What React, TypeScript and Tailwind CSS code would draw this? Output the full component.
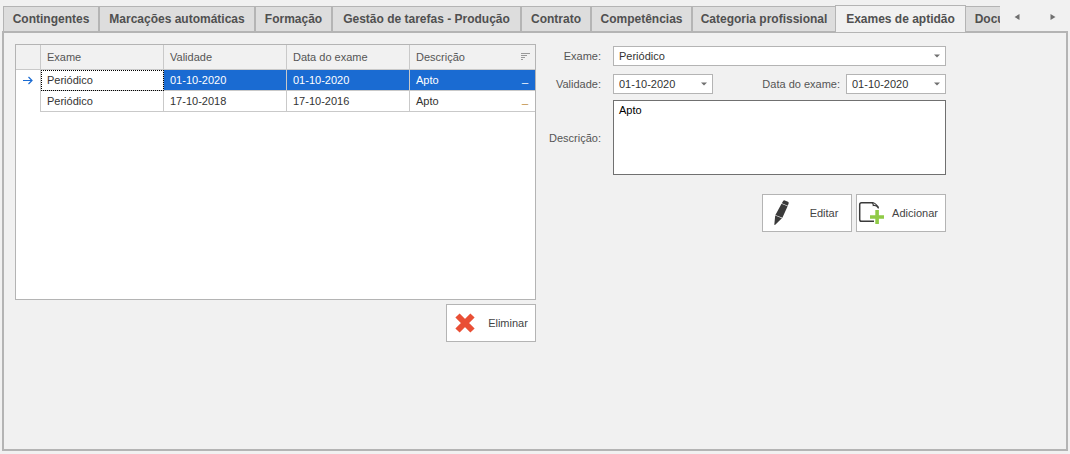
import { useState, type ReactNode } from "react";

const tabs = [
  { label: "Contingentes", width: "w-[97px]" },
  { label: "Marcações automáticas", width: "w-[156px]" },
  { label: "Formação", width: "w-[77px]" },
  { label: "Gestão de tarefas - Produção", width: "w-[189px]" },
  { label: "Contrato", width: "w-[70px]" },
  { label: "Competências", width: "w-[101px]" },
  { label: "Categoria profissional", width: "w-[142px]" },
  { label: "Exames de aptidão", width: "w-[131px]" },
  { label: "Documentos", width: "w-[92px]" },
];

const rows = [
  { exame: "Periódico", validade: "01-10-2020", data: "01-10-2020", descricao: "Apto" },
  { exame: "Periódico", validade: "17-10-2018", data: "17-10-2016", descricao: "Apto" },
];

function DownArrow() {
  return (
    <svg width="6" height="4" viewBox="0 0 6 4" aria-hidden="true">
      <path d="M0 .5h6L3 3.500z" fill="#707070" />
    </svg>
  );
}

function DateField({ id, value }: { id: string; value: string }) {
  return (
    <div className="flex h-5 w-[100px] border border-[#b4b4b4] bg-white">
      <input id={id} defaultValue={value} className="min-w-0 flex-1 pl-[5px] text-[#333333] outline-none" />
      <button type="button" aria-label="Abrir calendário" className="flex w-4 items-center justify-center">
        <DownArrow />
      </button>
    </div>
  );
}

function ActionButton({ icon, children }: { icon: ReactNode; children: ReactNode }) {
  return (
    <button type="button" className="flex h-[38px] w-[90px] items-center border border-[#b4b4b4] bg-white px-px text-[#444444]">
      {icon}
      <span className="flex-1 text-center">{children}</span>
    </button>
  );
}

function DeleteIcon() {
  return (
    <svg width="34" height="34" viewBox="0 0 34 34" className="shrink-0" aria-hidden="true">
      <path d="M9.500 9.500l15 15M24.500 9.500l-15 15" stroke="#e94f35" strokeWidth="6" />
    </svg>
  );
}

function PencilIcon() {
  return (
    <svg width="34" height="34" viewBox="0 0 34 34" className="shrink-0" aria-hidden="true">
      <path
        d="M19.300 4.700Q19.800 4 20.800 4.400L24 5.800Q25 6.300 24.700 7.300L23.800 9.800 17.800 7.200zM17.500 7.700L23.600 10.300 18.400 21.800 11.400 18.900zM11.200 19.400L17.900 22.200 11 29 10.300 28.700z"
        fill="#3a3a3a"
      />
    </svg>
  );
}

function AddIcon() {
  return (
    <svg width="28" height="34" viewBox="0 0 28 34" className="shrink-0" aria-hidden="true">
      <path d="M16 25.300H3.500Q1.700 25.300 1.700 23.500V8.500Q1.700 6.700 3.500 6.700H14.500" fill="none" stroke="#3a3a3a" strokeWidth="1.500" />
      <path d="M14 6.500Q17 6.500 20.300 11V12.500M14 6.500Q15.300 7.500 15.300 9.500Q18.500 9 20.300 12" fill="none" stroke="#3a3a3a" strokeWidth="1.200" />
      <path d="M17.300 14h3.600v5.200H26v3.600h-5.100V28h-3.600v-5.200H12v-3.600h5.300z" fill="#8fca46" />
    </svg>
  );
}

export default function App() {
  const [active, setActive] = useState(7);
  const head = "border-r border-b border-[#c9c9c9] bg-[#f1f1f1] pl-1.5 text-left font-normal text-[#555555]";
  const label = "text-right text-[#555555]";

  return (
    <main className="flex min-h-screen flex-col bg-[#f1f1f1] px-0.5 pt-[5px] pb-[3px] font-['Liberation_Sans',sans-serif] text-[11px] leading-4">
      <div className="flex h-[26px]">
        <div role="tablist" className="z-10 flex min-w-0 flex-1 items-end overflow-x-clip pl-px">
          {tabs.map((tab, i) => (
            <button
              key={tab.label}
              type="button"
              role="tab"
              aria-selected={i === active}
              onClick={() => setActive(i)}
              className={`${tab.width} shrink-0 text-center text-xs font-bold whitespace-nowrap text-[#505050] ${
                i === active
                  ? "-mb-px h-[27px] border border-b-0 border-[#b4b4b4] bg-[#f1f1f1]"
                  : `h-[25px] border-t border-[#b4b4b4] bg-[#dddddd] first:border-l ${i === active - 1 ? "" : "border-r-2"}`
              }`}
            >
              {tab.label}
            </button>
          ))}
        </div>
        <div className="flex w-[68px] items-center justify-between pr-3 pb-0.5 pl-3.5">
          <button type="button" aria-label="Separador anterior">
            <svg width="6" height="6" viewBox="0 0 6 6"><path d="M5.500 0v6L.5 3z" fill="#707070" /></svg>
          </button>
          <button type="button" aria-label="Separador seguinte">
            <svg width="6" height="6" viewBox="0 0 6 6"><path d="M.5 0v6l5-3z" fill="#707070" /></svg>
          </button>
        </div>
      </div>

      <section role="tabpanel" className="flex flex-1 items-start gap-3 border-2 border-[#b4b4b4] px-[11px] pt-[11px] pb-4">
        <div className="flex w-[521px] flex-col items-end gap-1">
          <div className="h-64 w-full border border-[#b4b4b4] bg-white">
            <table className="w-full table-fixed border-separate border-spacing-0">
              <colgroup>
                <col className="w-[25px]" />
                <col className="w-[123px]" />
                <col className="w-[123px]" />
                <col className="w-[123px]" />
                <col />
              </colgroup>
              <thead>
                <tr className="h-[25px]">
                  <th className={head} aria-label="Linha atual" />
                  <th className={head}>Exame</th>
                  <th className={head}>Validade</th>
                  <th className={head}>Data do exame</th>
                  <th className="border-b border-[#c9c9c9] bg-[#f1f1f1] pr-[5px] pl-1.5 font-normal text-[#555555]">
                    <div className="flex items-center justify-between">
                      Descrição
                      <svg width="9" height="8" viewBox="0 0 9 8" aria-hidden="true">
                        <path d="M0 .5h9M0 2.500h6M0 4.500h4M0 6.500h2" stroke="#999999" />
                      </svg>
                    </div>
                  </th>
                </tr>
              </thead>
              <tbody>
                {rows.map((row, i) => {
                  const cell = `border-r border-b border-[#c9c9c9] pl-1.5 ${i === 0 ? "bg-[#1a6bd2] text-white" : "text-[#333333]"}`;
                  return (
                    <tr key={row.validade} className="h-[21px]">
                      <td className="border-r border-[#c9c9c9]">
                        {i === 0 && (
                          <svg width="11" height="9" viewBox="0 0 11 9" className="mx-auto" aria-hidden="true">
                            <path d="M0 4.500h9M5.500 1L9 4.500 5.500 8" fill="none" stroke="#1a6bd2" strokeWidth="1.200" />
                          </svg>
                        )}
                      </td>
                      <td className={`border-r border-b border-[#c9c9c9] pl-1.5 text-[#333333] ${i === 0 ? "outline-1 -outline-offset-1 outline-dotted outline-black" : ""}`}>
                        {row.exame}
                      </td>
                      <td className={cell}>{row.validade}</td>
                      <td className={cell}>{row.data}</td>
                      <td className={`border-b border-[#c9c9c9] pr-[7px] pl-1.5 ${i === 0 ? "bg-[#1a6bd2] text-white" : "text-[#333333]"}`}>
                        <div className="flex justify-between">
                          {row.descricao}
                          <span className={`leading-3 ${i === 0 ? "text-white" : "text-[#c08a40]"}`}>_</span>
                        </div>
                      </td>
                    </tr>
                  );
                })}
              </tbody>
            </table>
          </div>
          <ActionButton icon={<DeleteIcon />}>Eliminar</ActionButton>
        </div>

        <form className="flex w-[398px] flex-col pt-0.5">
          <div className="grid grid-cols-[53px_1fr] items-center gap-x-3">
            <label htmlFor="exame" className={label}>Exame:</label>
            <div className="grid h-5 items-center border border-[#b4b4b4] bg-white">
              <select id="exame" className="col-start-1 row-start-1 w-full appearance-none pl-[5px] text-[#333333] outline-none">
                <option>Periódico</option>
              </select>
              <span className="pointer-events-none col-start-1 row-start-1 flex justify-self-end pr-[5px]">
                <DownArrow />
              </span>
            </div>

            <label htmlFor="validade" className={`mt-2 ${label}`}>Validade:</label>
            <div className="mt-2 flex items-center justify-between">
              <DateField id="validade" value="01-10-2020" />
              <div className="flex items-center gap-1.5">
                <label htmlFor="data" className={label}>Data do exame:</label>
                <DateField id="data" value="01-10-2020" />
              </div>
            </div>

            <label htmlFor="descricao" className={`mt-1.5 ${label}`}>Descrição:</label>
            <textarea
              id="descricao"
              defaultValue="Apto"
              className="mt-1.5 block h-[75px] resize-none border border-[#707070] bg-white px-[5px] py-px text-black outline-none"
            />
          </div>
          <div className="mt-[19px] flex justify-end gap-1">
            <ActionButton icon={<PencilIcon />}>Editar</ActionButton>
            <ActionButton icon={<AddIcon />}>Adicionar</ActionButton>
          </div>
        </form>
      </section>
    </main>
  );
}
